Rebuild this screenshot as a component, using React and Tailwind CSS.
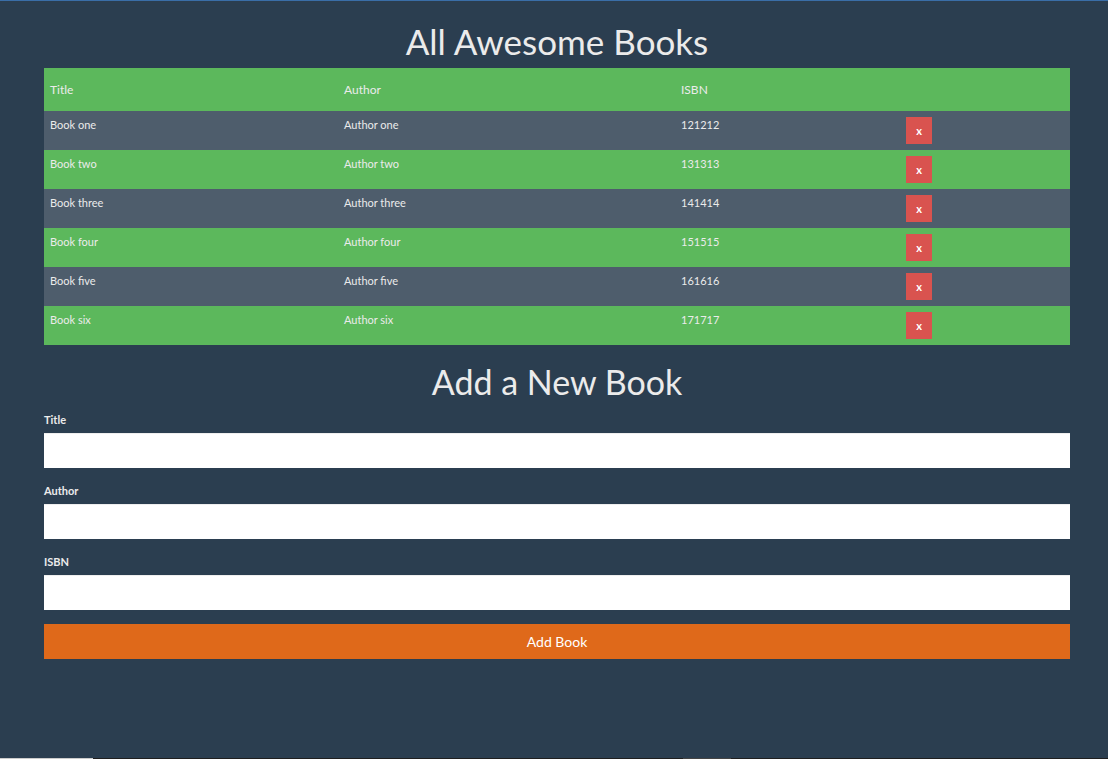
const books = [
  { title: "Book one", author: "Author one", isbn: "121212" },
  { title: "Book two", author: "Author two", isbn: "131313" },
  { title: "Book three", author: "Author three", isbn: "141414" },
  { title: "Book four", author: "Author four", isbn: "151515" },
  { title: "Book five", author: "Author five", isbn: "161616" },
  { title: "Book six", author: "Author six", isbn: "171717" },
];

function Field({ label }) {
  return (
    <div className="mb-[14px]">
      <label className="block text-[11px] font-bold leading-[17px] mb-[5px] text-[#ebebeb]">
        {label}
      </label>
      <input
        type="text"
        className="block w-full h-[35px] bg-white border-t border-[#eeeeee] outline-none"
      />
    </div>
  );
}

export default function App() {
  return (
    <div
      className="min-h-[759px] bg-[#2b3e50] text-[#ebebeb] flex flex-col"
      style={{ fontFamily: "Lato, 'Open Sans', sans-serif" }}
    >
      <div className="h-px bg-[#3a6ea8]" />
      <div className="flex-1 px-[44px] pr-[38px]">
        <h1 className="text-[35px] leading-[43px] text-center mt-[19px] mb-[5px]">
          All Awesome Books
        </h1>

        <div className="text-[11px]">
          <div className="grid grid-cols-[294px_337px_225px_1fr] h-[43px] items-center bg-[#5cb85c] text-[12px]">
            <div className="px-[6px]">Title</div>
            <div className="px-[6px]">Author</div>
            <div className="px-[6px]">ISBN</div>
            <div />
          </div>
          {books.map((b, i) => (
            <div
              key={b.isbn}
              className={
                "grid grid-cols-[294px_337px_225px_1fr] h-[39px] items-start pt-[6px] " +
                (i % 2 === 0 ? "bg-[#4e5d6c]" : "bg-[#5cb85c]")
              }
            >
              <div className="px-[6px] leading-[14px] pt-[1px]">{b.title}</div>
              <div className="px-[6px] leading-[14px] pt-[1px]">{b.author}</div>
              <div className="px-[6px] leading-[14px] pt-[1px]">{b.isbn}</div>
              <div className="px-[6px]">
                <button className="w-[26px] h-[27px] bg-[#d9534f] text-white text-[11px] font-bold leading-none">
                  x
                </button>
              </div>
            </div>
          ))}
        </div>

        <h2 className="text-[34px] leading-[35px] text-center mt-[19px] mb-[12px]">
          Add a New Book
        </h2>

        <form onSubmit={(e) => e.preventDefault()}>
          <Field label="Title" />
          <Field label="Author" />
          <Field label="ISBN" />
          <button
            type="submit"
            className="block w-full h-[35px] bg-[#df691a] text-white text-[14px]"
          >
            Add Book
          </button>
        </form>
      </div>
      <div className="flex h-px">
        <div className="w-[93px] bg-[#cccccc]" />
        <div className="w-[590px] bg-[#1f1f1f]" />
        <div className="w-[48px] bg-[#444444]" />
        <div className="flex-1 bg-[#1f1f1f]" />
      </div>
    </div>
  );
}
